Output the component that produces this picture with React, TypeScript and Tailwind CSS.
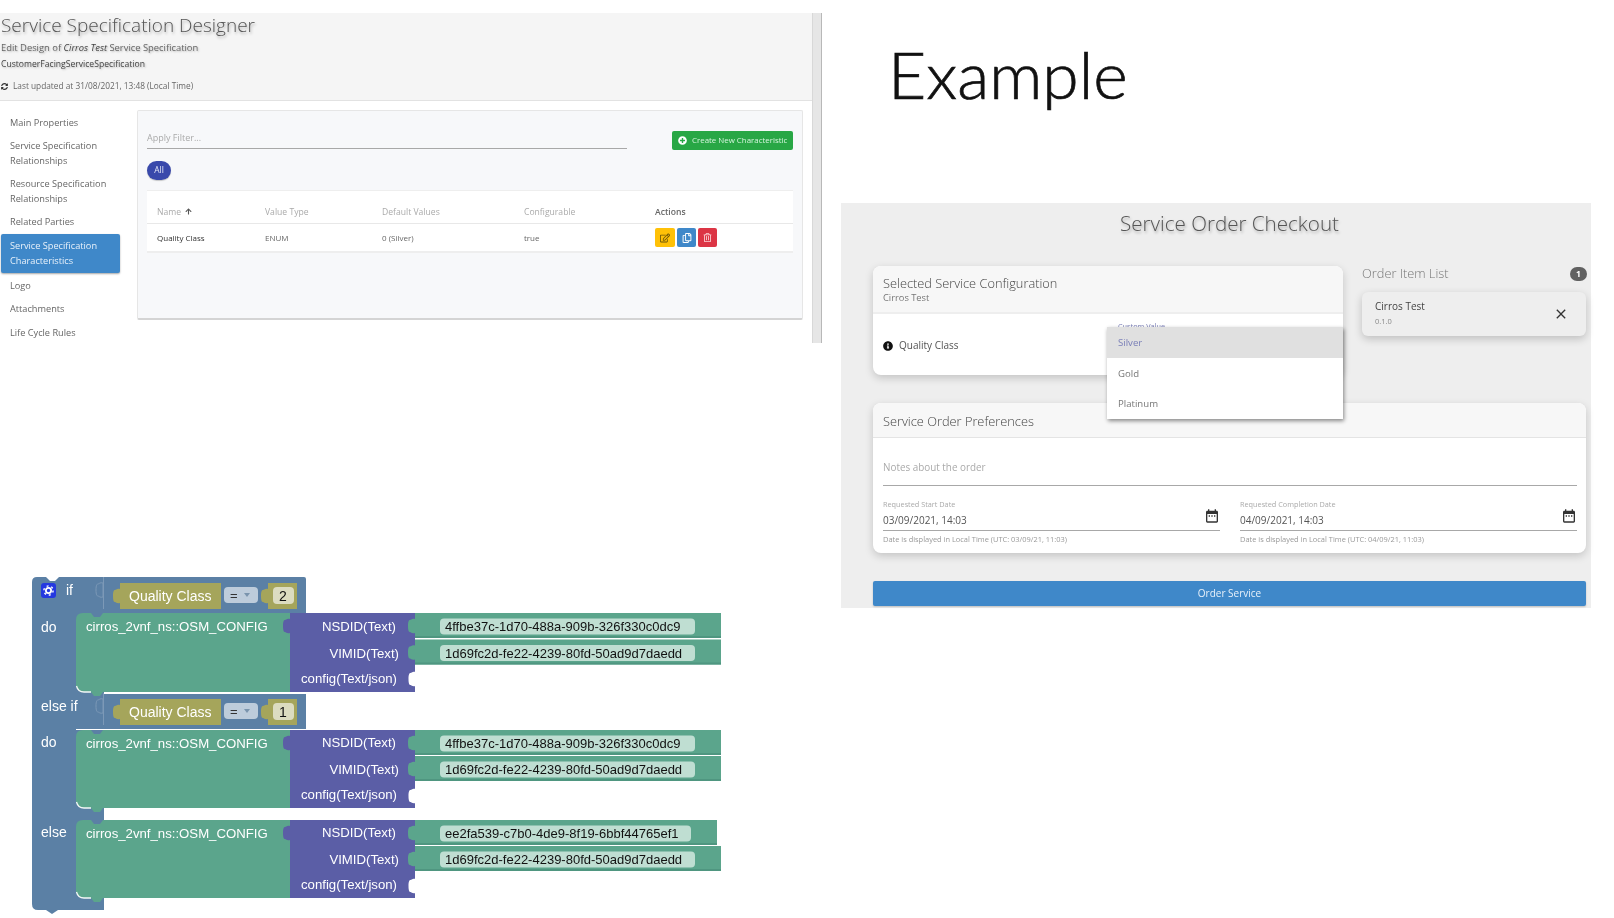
import React from "react";
import { FaSyncAlt, FaPlusCircle, FaRegEdit, FaRegCopy, FaRegTrashAlt, FaInfoCircle, FaArrowUp } from "react-icons/fa";
import { MdDateRange, MdClose } from "react-icons/md";

const G = "#5ba58c";
const GD = "#4f9680";
const P = "#5b5ea6";
const B = "#5b80a5";
const O = "#a5a55b";
const SANS = "'Liberation Sans', Arial, sans-serif";
const VALUE_SIZE = 13;
const LABEL_SIZE = 13.2;

const tab = (x: number, y: number) => `M${x} ${y}c-3-1-4 1-5 1s-2 1-2 6 1 6 2 6 2 2 5 1z`;

function Txt({ x, y, children, anchor, fill = "#fff", size = 14 }: { x: number; y: number; children: React.ReactNode; anchor?: "end" | "middle"; fill?: string; size?: number }) {
  return (
    <text x={x} y={y + size * 0.36} textAnchor={anchor} fill={fill} fontFamily={SANS} fontSize={size}>
      {children}
    </text>
  );
}

function Value({ y, h = 26, right = 721, text, fieldRight = 695 }: { y: number; h?: number; right?: number; text: string; fieldRight?: number }) {
  return (
    <g>
      <rect x={415} y={y} width={right - 415} height={h - 1} fill={G} />
      <rect x={415} y={y + h - 3} width={right - 415} height={2} fill={GD} />
      <path d={tab(415, y + 6)} fill={G} />
      <rect x={440} y={y + 5.5} width={fieldRight - 440} height={16} rx={4} fill="#bfded2" />
      <Txt x={445} y={y + 13.5} fill="#111" size={VALUE_SIZE}>{text}</Txt>
    </g>
  );
}

function Call({ y, h, v1, v2, v1Right, v1Field, v2off = 26 }: { y: number; h: number; v1: string; v2: string; v1Right?: number; v1Field?: number; v2off?: number }) {
  const b = y + h;
  const short = h === 78;
  return (
    <g>
      <rect x={76} y={y} width={28} height={8} fill={B} />
      <rect x={76} y={b - 8} width={16} height={8} fill={B} />
      <path d={`M76 ${y + 7}Q76 ${y} 83 ${y}H91L94 ${y + 4}H100L103 ${y}H290V${b}H103L100 ${b + 4}H94L91 ${b}H84Q78 ${b} 76 ${b - 6}Z`} fill={G} />
      <path d={`M76.5 ${b - 6}Q78 ${b} 84 ${b}H91`} fill="none" stroke="#f4f8f7" strokeWidth={1.3} />
      <Txt x={86} y={y + 13} size={LABEL_SIZE}>cirros_2vnf_ns::OSM_CONFIG</Txt>
      <rect x={290} y={y} width={125} height={h} fill={P} />
      <path d={tab(290, y + 6)} fill={P} />
      <Txt x={396} y={y + (short ? 12.5 : 13)} anchor="end" size={LABEL_SIZE}>NSDID(Text)</Txt>
      <Txt x={399} y={y + (short ? 39 : 40)} anchor="end" size={LABEL_SIZE}>VIMID(Text)</Txt>
      <Txt x={397} y={y + (short ? 64.5 : 65.5)} anchor="end" size={LABEL_SIZE}>config(Text/json)</Txt>
      <Value y={y} right={v1Right} fieldRight={v1Field} text={v1} />
      <Value y={y + v2off} text={v2} />
      <path d={tab(415.5, y + 59)} fill="#fff" />
    </g>
  );
}

function Cond({ y, value }: { y: number; value: string }) {
  return (
    <g>
      <rect x={103} y={y - 6} width={1} height={32} fill="#7c99b7" />
      <path d={tab(103, y)} fill="none" stroke="#7c99b7" />
      <rect x={120} y={y} width={101} height={26} fill={O} />
      <path d={tab(120, y + 6)} fill={O} />
      <Txt x={129} y={y + 13}>Quality Class</Txt>
      <rect x={224} y={y + 4} width={34} height={16} rx={4} fill="#bdccdb" />
      <Txt x={230} y={y + 12} fill="#333" size={13}>=</Txt>
      <path d={`M244 ${y + 10}h6l-3 4z`} fill="#7a94ad" />
      <rect x={268} y={y} width={29} height={26} fill={O} />
      <path d={tab(268, y + 6)} fill={O} />
      <rect x={273} y={y + 4} width={21} height={17} rx={4} fill="#dcdcc0" />
      <Txt x={283} y={y + 13} anchor="middle" fill="#111">{value}</Txt>
    </g>
  );
}

function Blockly() {
  return (
    <svg width="760" height="348" viewBox="0 570 760 348" className="block blur-[0.25px]">
      <path
        d="M32 582Q32 577 37 577H46L50 581H55L59 577H304Q306 577 306 579V613H76V692H104V694H306V729H76V808H104V820H76V898H104V910H58L52 914L46 910H38Q32 910 32 904Z"
        fill={B}
      />
      <rect x={41} y={583} width={15} height={15} rx={3} fill="#2438e0" />
      <circle cx={48.5} cy={590.5} r={2.6} fill="none" stroke="#fff" strokeWidth={1.8} />
      <circle cx={48.5} cy={590.5} r={4.6} fill="none" stroke="#fff" strokeWidth={1.4} strokeDasharray="2 2.8" />
      <Txt x={66} y={590}>if</Txt>
      <Txt x={41} y={627}>do</Txt>
      <Txt x={41} y={706}>else if</Txt>
      <Txt x={41} y={742}>do</Txt>
      <Txt x={41} y={832}>else</Txt>
      <Cond y={583} value="2" />
      <Cond y={699} value="1" />
      <Call y={613} h={79} v2off={26.5} v1="4ffbe37c-1d70-488a-909b-326f330c0dc9" v2="1d69fc2d-fe22-4239-80fd-50ad9d7daedd" />
      <Call y={730} h={78} v1="4ffbe37c-1d70-488a-909b-326f330c0dc9" v2="1d69fc2d-fe22-4239-80fd-50ad9d7daedd" />
      <Call y={820} h={78} v1="ee2fa539-c7b0-4de9-8f19-6bbf44765ef1" v1Right={717} v1Field={691} v2="1d69fc2d-fe22-4239-80fd-50ad9d7daedd" />
    </svg>
  );
}

function NavItem({ children, active }: { children: React.ReactNode; active?: boolean }) {
  return (
    <div
      className={
        active
          ? "px-[9px] py-[5px] mb-px leading-[14.5px] rounded-[2px] bg-[#3f88c9] text-[#e8f1fa] shadow-[0_1px_2px_rgba(0,0,0,0.35)]"
          : "px-[9px] py-[4.5px] leading-[14.5px] text-[#666]"
      }
    >
      {children}
    </div>
  );
}

function Designer() {
  return (
    <div className="flex w-[822px] h-[330px] blur-[0.35px]">
      <div className="w-[812px] flex flex-col">
        <div className="h-[88px] shrink-0 bg-[#f5f5f5] border-b border-[#e2e2e2] pl-px">
          <div className="h-[24px] leading-[24px] text-[19px] font-light text-[#555] whitespace-nowrap [text-shadow:1px_2px_3px_rgba(0,0,0,0.3)]">Service Specification Designer</div>
          <div className="mt-[4px] h-[14px] leading-[14px] text-[9.4px] text-[#666] [text-shadow:1px_1px_2px_rgba(0,0,0,0.25)]">
            Edit Design of <i className="text-[#444]">Cirros Test</i> Service Specification
          </div>
          <div className="mt-[2px] h-[14px] leading-[14px] text-[8.6px] text-[#444] [text-shadow:1px_1px_2px_rgba(0,0,0,0.25)]">CustomerFacingServiceSpecification</div>
          <div className="mt-[8px] h-[14px] flex items-center gap-[5px] text-[8.3px] text-[#666]">
            <FaSyncAlt className="text-[7px] text-[#333]" />
            <span>Last updated at 31/08/2021, 13:48 (Local Time)</span>
          </div>
        </div>
        <div className="flex">
          <div className="w-[119px] ml-px pt-[10px] text-[9.2px] shrink-0">
            <NavItem>Main Properties</NavItem>
            <NavItem>Service Specification<br />Relationships</NavItem>
            <NavItem>Resource Specification<br />Relationships</NavItem>
            <NavItem>Related Parties</NavItem>
            <NavItem active>Service Specification<br />Characteristics</NavItem>
            <NavItem>Logo</NavItem>
            <NavItem>Attachments</NavItem>
            <NavItem>Life Cycle Rules</NavItem>
          </div>
          <div className="ml-[17px] mt-[9px] w-[666px] h-[210px] bg-[#f7f8fa] border border-[#e6e6e6] border-b-2 border-b-[#d4d4d4] rounded-[2px] px-[9px] pt-[20px]">
            <div className="flex items-start justify-between">
              <div className="w-[480px] h-[18px] border-b border-[#a8a8a8] text-[9px] text-[#aaa] leading-[13px]">Apply Filter...</div>
              <div className="h-[19px] w-[121px] bg-[#28a745] rounded-[2px] flex items-center pl-[6px] gap-[5px] text-[7.9px] text-[#d6f5de] whitespace-nowrap">
                <FaPlusCircle className="text-[9px] text-white shrink-0" />
                <span>Create New Characteristic</span>
              </div>
            </div>
            <div className="mt-[11px] w-[24px] h-[19px] rounded-full bg-[#3949ab] text-[#e4e7f7] text-[8.5px] flex items-center justify-center shadow-[0_1px_1px_rgba(0,0,0,0.2)]">All</div>
            <div className="mt-[10px] bg-white border-y border-[#eeeeee] border-b-2 text-[8.6px]">
              <div className="h-[33px] pt-[10px] flex items-center border-b border-[#e8e8e8] text-[#aaa]">
                <div className="w-[118px] pl-[10px] flex items-center gap-[4px]">Name <FaArrowUp className="text-[7px] text-[#555]" /></div>
                <div className="w-[117px]">Value Type</div>
                <div className="w-[142px]">Default Values</div>
                <div className="w-[131px]">Configurable</div>
                <div className="text-[#666] font-semibold">Actions</div>
              </div>
              <div className="h-[27px] flex items-center text-[#666] text-[8px]">
                <div className="w-[118px] pl-[10px] text-[#333]">Quality Class</div>
                <div className="w-[117px]">ENUM</div>
                <div className="w-[142px]">0 (Silver)</div>
                <div className="w-[131px]">true</div>
                <div className="flex gap-[2px]">
                  <div className="w-[20px] h-[19px] rounded-[2px] bg-[#ffc107] flex items-center justify-center"><FaRegEdit className="text-[10px] text-[#6b5408]" /></div>
                  <div className="w-[19px] h-[19px] rounded-[2px] bg-[#3f88c9] flex items-center justify-center"><FaRegCopy className="text-[10px] text-white" /></div>
                  <div className="w-[19px] h-[19px] rounded-[2px] bg-[#dc3545] flex items-center justify-center"><FaRegTrashAlt className="text-[9px] text-[#fbd5d9]" /></div>
                </div>
              </div>
            </div>
          </div>
        </div>
      </div>
      <div className="w-[10px] h-full bg-[#e6e6e6] border-l border-r border-l-[#d8d8d8] border-r-[#b8b8b8]" />
    </div>
  );
}

function DateField({ label, value, help }: { label: string; value: string; help: string }) {
  return (
    <div className="relative">
      <div className="h-[11px] leading-[10px] text-[7.3px] text-[#aaa]">{label}</div>
      <div className="h-[21px] border-b border-[#a8a8a8] flex items-center text-[10px] text-[#555]">{value}</div>
      <MdDateRange className="absolute right-0 top-[9px] text-[16px] text-[#333]" />
      <div className="mt-[3px] h-[11px] leading-[11px] text-[7.45px] text-[#999]">{help}</div>
    </div>
  );
}

function Checkout() {
  return (
    <div className="w-[750px] h-[405px] bg-[#eeeeee] pl-[32px] pr-[5px] blur-[0.35px]">
      <div className="h-[41px] flex items-center justify-center text-[20.6px] font-light text-[#555] [text-shadow:1px_2px_3px_rgba(0,0,0,0.3)]">Service Order Checkout</div>
      <div className="mt-[22px] flex gap-[19px] h-[109px]">
        <div className="relative w-[470px] h-[109px] bg-white rounded-[8px] shadow-[0_3px_8px_rgba(0,0,0,0.18)]">
          <div className="h-[48px] bg-[#f7f7f7] rounded-t-[8px] border-b-2 border-[#eeeeee] pl-[10px] pt-[9px]">
            <div className="h-[17px] leading-[17px] text-[12.8px] font-light text-[#444]">Selected Service Configuration</div>
            <div className="h-[12px] leading-[12px] text-[9.3px] text-[#777]">Cirros Test</div>
          </div>
          <div className="h-[63px] pl-[10px] flex items-center gap-[6px] text-[10px] text-[#555]">
            <FaInfoCircle className="text-[10px] text-[#111]" />
            <span>Quality Class</span>
          </div>
          <div className="absolute left-[245px] top-[55px] text-[7.3px] text-[#7a7fb8]">Custom Value</div>
          <div className="absolute z-10 left-[234px] top-[61px] w-[236px] h-[92px] bg-white shadow-[1px_2px_4px_rgba(0,0,0,0.45)] text-[9.6px]">
            <div className="h-[31px] pt-[2px] bg-[#e0e0e0] pl-[11px] flex items-center text-[#7a7fb8]">Silver</div>
            <div className="h-[30px] pt-[2px] pl-[11px] flex items-center text-[#777]">Gold</div>
            <div className="h-[31px] pt-[2px] pl-[11px] flex items-center text-[#777]">Platinum</div>
          </div>
        </div>
        <div className="w-[224px]">
          <div className="h-[16px] flex items-center justify-between text-[12.8px] font-light text-[#777]">
            <span>Order Item List</span>
            <span className="w-[17px] h-[14px] -mr-px rounded-full bg-[#616161] text-white text-[8.5px] font-bold flex items-center justify-center">1</span>
          </div>
          <div className="mt-[10px] h-[44px] bg-[#eeeeee] rounded-[6px] shadow-[0_3px_8px_rgba(0,0,0,0.2)] pl-[13px] pr-[17px] flex items-center justify-between">
            <div>
              <div className="h-[15px] leading-[15px] text-[10px] text-[#444]">Cirros Test</div>
              <div className="h-[15px] leading-[15px] text-[7.5px] text-[#888]">0.1.0</div>
            </div>
            <MdClose className="text-[16px] text-[#333]" />
          </div>
        </div>
      </div>
      <div className="mt-[28px] h-[150px] bg-white rounded-[8px] shadow-[0_3px_8px_rgba(0,0,0,0.18)]">
        <div className="h-[35px] pt-[3px] bg-[#f7f7f7] rounded-t-[8px] border-b border-[#e4e4e4] pl-[10px] flex items-center text-[12.8px] font-light text-[#444]">Service Order Preferences</div>
        <div className="px-[10px] pr-[9px]">
          <div className="h-[48px] border-b border-[#a8a8a8] pt-[21px] leading-[16px] text-[9.9px] text-[#aaa]">Notes about the order</div>
          <div className="mt-[13px] grid grid-cols-2 gap-[20px]">
            <DateField label="Requested Start Date" value="03/09/2021, 14:03" help="Date is displayed in Local Time (UTC: 03/09/21, 11:03)" />
            <DateField label="Requested Completion Date" value="04/09/2021, 14:03" help="Date is displayed in Local Time (UTC: 04/09/21, 11:03)" />
          </div>
        </div>
      </div>
      <div className="mt-[28px] h-[25px] bg-[#3f88c9] rounded-[2px] flex items-center justify-center text-[10px] text-[#e8f1fa] shadow-[0_1px_2px_rgba(0,0,0,0.2)]">Order Service</div>
    </div>
  );
}

export default function App() {
  return (
    <div className="flex w-[1614px] h-[918px] overflow-hidden bg-white font-['Open_Sans',sans-serif]">
      <div className="w-[841px] shrink-0 pt-[13px]">
        <Designer />
        <div className="mt-[227px]">
          <Blockly />
        </div>
      </div>
      <div className="w-[750px]">
        <div className="h-[203px] pl-[47px] pt-[34px] text-[66px] leading-[80px] font-light text-[#111] [-webkit-text-stroke:0.7px_#111] font-['Lato',sans-serif]">Example</div>
        <Checkout />
      </div>
    </div>
  );
}
